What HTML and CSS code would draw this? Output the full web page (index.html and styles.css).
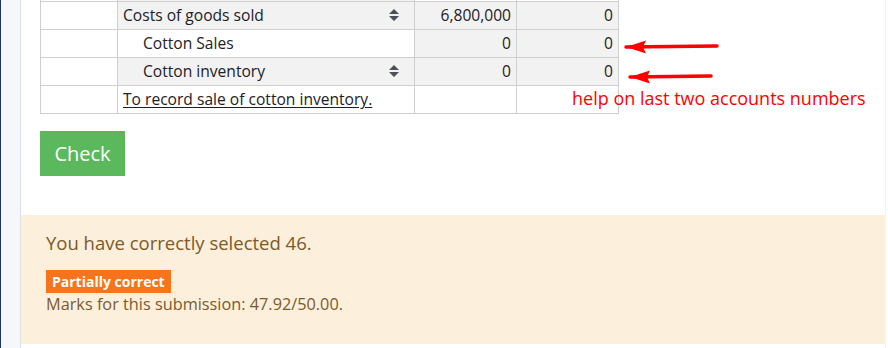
FILE: index.html
```html
<!DOCTYPE html>
<html>
<head>
<meta charset="utf-8">
<link rel="stylesheet" href="styles.css">
</head>
<body>
<div class="page">
  <div class="drawer"></div>
  <main class="content">
    <div class="question">
      <div class="journal-wrap">
        <table class="journal">
          <colgroup>
            <col class="c1"><col class="c2"><col class="c3"><col class="c4">
          </colgroup>
          <tr class="prev">
            <td></td><td class="shade"></td><td></td><td></td>
          </tr>
          <tr>
            <td></td>
            <td class="shade"><div class="acct"><span>Costs of goods sold</span><svg class="sort" viewBox="0 0 10 12" width="10" height="12"><path d="M0 5 L5 0 L10 5 Z M0 7 L10 7 L5 12 Z" fill="#495057"/></svg></div></td>
            <td class="shade num">6,800,000</td>
            <td class="shade num">0</td>
          </tr>
          <tr>
            <td></td>
            <td class="indent">Cotton Sales</td>
            <td class="shade num">0</td>
            <td class="shade num">0</td>
          </tr>
          <tr>
            <td></td>
            <td class="shade"><div class="acct indent-in"><span>Cotton inventory</span><svg class="sort" viewBox="0 0 10 12" width="10" height="12"><path d="M0 5 L5 0 L10 5 Z M0 7 L10 7 L5 12 Z" fill="#495057"/></svg></div></td>
            <td class="shade num">0</td>
            <td class="shade num">0</td>
          </tr>
          <tr>
            <td></td>
            <td><span class="memo">To record sale of cotton inventory.</span></td>
            <td></td>
            <td></td>
          </tr>
        </table>
        <svg class="arrows" width="120" height="50" viewBox="0 0 120 50">
          <path d="M20 9 L111 8" stroke="#ff0000" stroke-width="3.5" stroke-linecap="round"/>
          <path d="M20 9 L40 2.5 L37 9 L40 15.5 Z" fill="#ff0000"/>
          <path d="M24 39 L105 38" stroke="#ff0000" stroke-width="3.5" stroke-linecap="round"/>
          <path d="M24 39 L44 32.5 L41 39 L44 45.5 Z" fill="#ff0000"/>
        </svg>
        <div class="note">help on last two accounts numbers</div>
      </div>
      <button class="check">Check</button>
    </div>
    <div class="outcome">
      <div class="feedback">You have correctly selected 46.</div>
      <div class="grade">
        <span class="badge">Partially correct</span>
        <div class="marks">Marks for this submission: 47.92/50.00.</div>
      </div>
    </div>
  </main>
</div>
</body>
</html>
```

FILE: styles.css
```css
html, body {
  margin: 0;
  padding: 0;
  background: #ffffff;
  height: 348px;
  overflow: hidden;
}
body {
  font-family: "Open Sans", "Liberation Sans", sans-serif;
  color: #1d2125;
}
.page {
  display: flex;
  height: 348px;
}
.drawer {
  width: 19px;
  flex: none;
  background: #f5f7fa;
  border-left: 1px solid #1f3563;
  border-right: 1px solid #dcdfe3;
}
.content {
  width: 864px;
  flex: none;
  border-right: 1px solid #f3f3f3;
  display: flex;
  flex-direction: column;
}
.question {
  padding: 0 0 0 19px;
}
.journal-wrap {
  position: relative;
  margin-top: -27px;
}
.journal {
  border-collapse: collapse;
  table-layout: fixed;
  width: 579px;
  font-size: 15.6px;
}
.c1 { width: 77px; }
.c2 { width: 297px; }
.c3 { width: 102px; }
.c4 { width: 102px; }
.journal td {
  border: 1px solid #cfcfcf;
  height: 28px;
  padding: 0 5px;
  box-sizing: border-box;
  white-space: nowrap;
  line-height: 20px;
}
.journal .prev td { border-top: none; }
.journal td.shade { background: #f2f2f2; }
.journal td.num { text-align: right; }
.journal td.indent { padding-left: 25px; }
.acct {
  display: flex;
  justify-content: space-between;
  align-items: center;
  padding-right: 10px;
}
.acct.indent-in { padding-left: 20px; }
.sort { display: block; }
.memo {
  text-decoration: underline;
  text-underline-offset: 2px;
}
.arrows {
  position: absolute;
  left: 566px;
  top: 65px;
}
.note {
  position: absolute;
  left: 532px;
  top: 113px;
  color: #ff0000;
  font-size: 18px;
  white-space: nowrap;
}
.check {
  display: block;
  margin-top: 17px;
  width: 85px;
  height: 45px;
  border: none;
  border-radius: 0;
  background: #5cb85c;
  color: #ffffff;
  font-family: "Open Sans", "Liberation Sans", sans-serif;
  font-size: 20px;
  padding: 0;
}
.outcome {
  margin-top: 39px;
  height: 129px;
  box-sizing: border-box;
  background: #fcefdc;
  color: #7d5a29;
  padding: 15px 25px 0 25px;
}
.feedback {
  font-size: 18.5px;
  line-height: 26px;
}
.grade {
  margin-top: 14px;
}
.badge {
  display: inline-block;
  background: #f7731c;
  color: #ffffff;
  font-weight: 700;
  font-size: 14px;
  line-height: 23px;
  padding: 0 6px;
}
.marks {
  font-size: 16.3px;
  line-height: 22px;
  margin-top: 0;
}
```
